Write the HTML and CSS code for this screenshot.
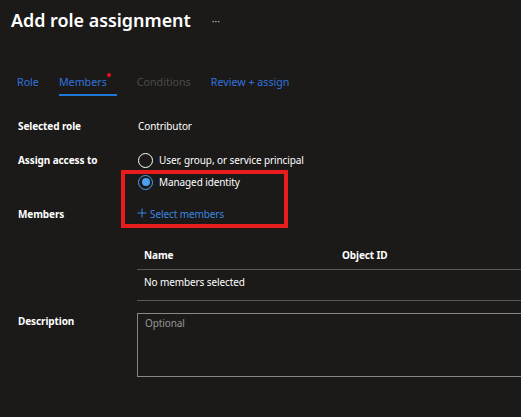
FILE: index.html
```html
<!DOCTYPE html>
<html>
<head>
<meta charset="utf-8">
<link rel="stylesheet" href="styles.css">
</head>
<body>
<div class="page">
  <header class="head">
    <h1 class="title">Add role assignment</h1>
    <span class="more">···</span>
  </header>
  <nav class="tabs">
    <a class="tab">Role</a>
    <a class="tab active">Members<span class="dot"></span></a>
    <a class="tab disabled">Conditions</a>
    <a class="tab">Review + assign</a>
  </nav>
  <div class="form">
    <div class="row r-role">
      <div class="label">Selected role</div>
      <div class="value">Contributor</div>
    </div>
    <div class="row r-assign">
      <div class="label">Assign access to</div>
      <div class="value">
        <div class="radio"><span class="circle"></span>User, group, or service principal</div>
        <div class="radio sel"><span class="circle"><span class="inner"></span></span>Managed identity</div>
      </div>
    </div>
    <div class="row r-members">
      <div class="label">Members</div>
      <div class="value">
        <a class="add"><svg class="plus" width="10" height="10" viewBox="0 0 10 10"><path d="M5 0.5V9.5M0.5 5H9.5" stroke="#3a86e0" stroke-width="1" fill="none"/></svg>Select members</a>
      </div>
    </div>
    <div class="table">
      <div class="trow thead"><span class="c1">Name</span><span class="c2">Object ID</span></div>
      <div class="trow tbody"><span class="c1">No members selected</span></div>
    </div>
    <div class="row r-desc">
      <div class="label">Description</div>
      <div class="value"><div class="textarea">Optional</div></div>
    </div>
  </div>
  <div class="highlight"></div>
</div>
</body>
</html>
```
FILE: styles.css
```css
* { box-sizing: border-box; }
html, body { margin: 0; padding: 0; background: #1b1a19; }
body {
  font-family: "Segoe UI", "Noto Sans", "Open Sans", sans-serif;
  color: #ffffff;
  width: 521px; height: 417px; overflow: hidden;
}
.page { position: relative; height: 417px; }
.head { display: flex; align-items: center; height: 40px; padding: 0 0 0 11px; }
.title { margin: 0; font-size: 17.9px; font-weight: 600; line-height: 24px; }
.more { margin-left: 21px; color: #c8c6c4; font-size: 10px; padding-top: 1px; }
.tabs { display: flex; gap: 20px; padding: 34px 0 0 17px; height: 76px; }
.tab { position: relative; font-size: 10.7px; color: #2f74dc; height: 22px; line-height: 16px; }
.tab.active { border-bottom: 2px solid #1f78d6; padding-right: 10px; }
.tab.disabled { color: #4b4a49; }
.dot { position: absolute; top: -1px; right: 6px; width: 4px; height: 4px; border-radius: 50%; background: #e81123; }
.form { padding: 0 0 0 18px; font-size: 10px; line-height: 14px; letter-spacing: -0.1px; }
.row { display: flex; }
.label { width: 120px; font-weight: 700; flex: none; }
.value { flex: 1; }
.r-role { height: 20px; align-items: center; }
.r-assign { margin-top: 13px; }
.r-assign .label { line-height: 22px; }
.radio { display: flex; align-items: center; height: 22px; }
.circle { width: 15px; height: 15px; border: 1px solid #ffffff; border-radius: 50%; margin-right: 6px; display: flex; align-items: center; justify-content: center; flex: none; }
.radio.sel .circle { border-color: #4aa0f0; }
.inner { width: 8px; height: 8px; border-radius: 50%; background: #4aa0f0; }
.r-members { margin-top: 11px; height: 20px; align-items: center; }
.add { color: #3a86e0; display: flex; align-items: center; margin-left: -1px; }
.plus { margin-right: 3px; margin-top: -2px; }
.table { margin: 22px 0 0 119px; }
.trow { display: flex; padding: 0 7px; }
.thead { height: 24px; border-bottom: 1px solid #5a5856; font-weight: 700; padding-top: 2px; }
.tbody { height: 31px; border-bottom: 1px solid #5a5856; padding-top: 5px; }
.c1 { width: 198px; }
.r-desc { margin-top: 12px; }
.r-desc .label { padding-top: 1px; }
.textarea { height: 64px; border: 1px solid #8a8886; margin-left: -1px; margin-right: -8px; padding: 2px 7px; color: #979593; }
.highlight { position: absolute; left: 121px; top: 170px; width: 167px; height: 58px; border: 4px solid #e81c1c; pointer-events: none; }
```
